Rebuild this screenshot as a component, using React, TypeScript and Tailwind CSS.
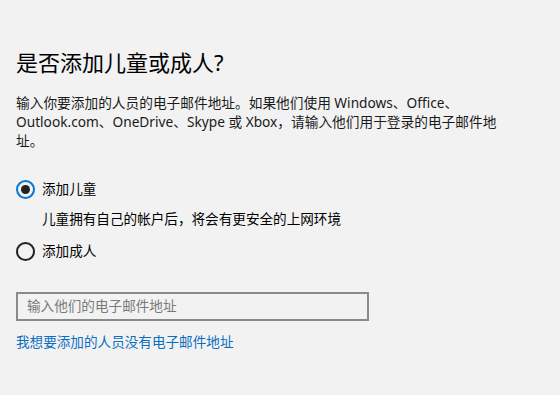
export default function App() {
  return (
    <div
      className="w-[560px] h-[395px] bg-[#f2f2f2] text-[#000000] overflow-hidden"
      style={{ fontFamily: '"Noto Sans", "Noto Sans CJK SC", sans-serif' }}
    >
      <div className="pl-[16px] pt-[47px]">
        <h1 className="text-[22px] leading-[30px] font-normal text-black">是否添加儿童或成人?</h1>

        <p className="mt-[16px] text-[13.7px] leading-[19px] text-[#1a1a1a]">
          输入你要添加的人员的电子邮件地址。如果他们使用 Windows、Office、
          <br />
          Outlook.com、OneDrive、Skype 或 Xbox，请输入他们用于登录的电子邮件地
          <br />
          址。
        </p>

        <div className="mt-[27px] flex items-center gap-[7px] h-[24px]">
          <span className="w-[19px] h-[19px] rounded-full border-2 border-[#0078d7] flex items-center justify-center">
            <span className="w-[9px] h-[9px] rounded-full bg-[#222222]" />
          </span>
          <span className="text-[13.6px] text-black">添加儿童</span>
        </div>

        <p className="mt-[6px] ml-[26px] text-[13.6px] leading-[24px] text-black">
          儿童拥有自己的帐户后，将会有更安全的上网环境
        </p>

        <div className="mt-[8px] flex items-center gap-[7px] h-[24px]">
          <span className="w-[19px] h-[19px] rounded-full border-2 border-[#222222]" />
          <span className="text-[13.6px] text-black">添加成人</span>
        </div>

        <div className="mt-[29px] w-[353px] h-[29px] border-2 border-[#8a8a8a] bg-[#f2f2f2] flex items-center px-[9px]">
          <span className="text-[13.6px] text-[#7a7a7a]">输入他们的电子邮件地址</span>
        </div>

        <a className="mt-[11px] block text-[13.6px] leading-[20px] text-[#0a6fc2]" href="#">
          我想要添加的人员没有电子邮件地址
        </a>
      </div>
    </div>
  )
}
